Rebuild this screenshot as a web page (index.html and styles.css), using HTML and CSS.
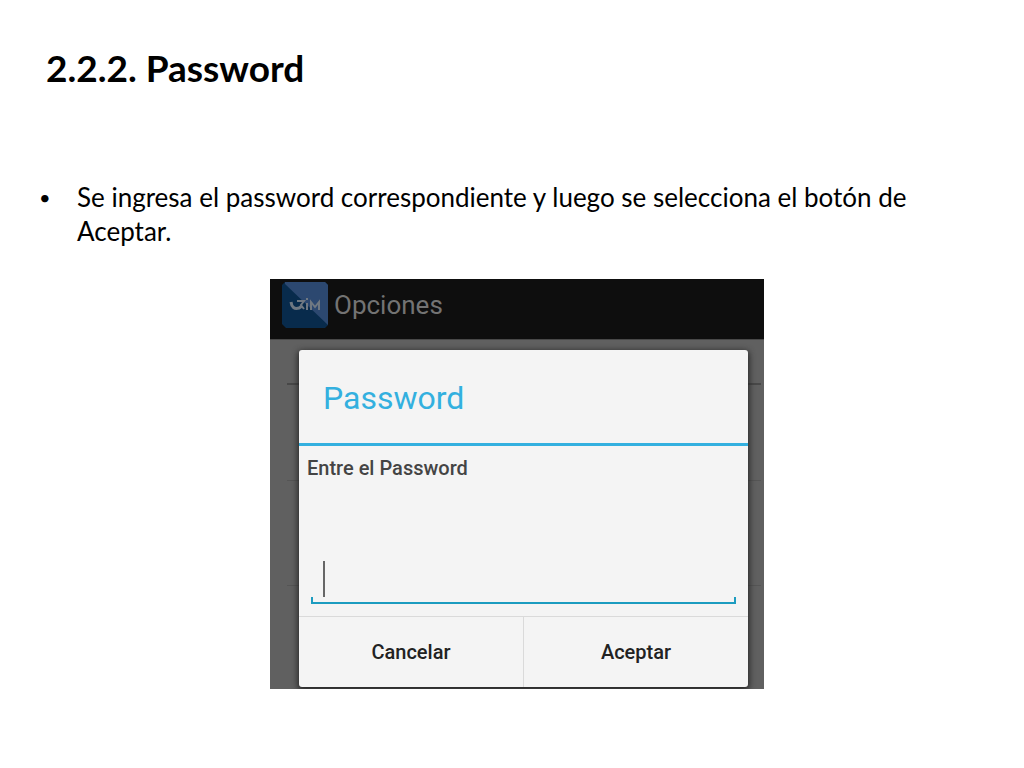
FILE: index.html
```html
<!DOCTYPE html>
<html lang="es">
	<head>
		<meta charset="UTF-8">
		<title>2.2.2. Password</title>
		<link rel="stylesheet" href="styles.css">
	</head>
	<body>
		<main class="slide">
			<h1>2.2.2. Password</h1>
			<ul class="steps">
				<li>Se ingresa el password correspondiente y luego se selecciona el botón de Aceptar.</li>
			</ul>
			<div class="screen">
				<header class="app-bar">
					<svg class="logo" viewBox="0 0 46 46" aria-hidden="true">
						<path d="M3 0H43L46 3V43L43 46H4L0 42V3Z" fill="#082b4c"/>
						<path d="M3 0H43L46 3V43L3 2Z" fill="#2c4870"/>
						<g fill="none" stroke="#6f7882" stroke-width="2">
							<path d="M9 20Q10 28 17 26L20 24" stroke-width="3"/>
							<path d="M15 19H22L19 23L22 27"/>
							<path d="M25 21V28M25 16V18"/>
							<path d="M29 28V20L33 25L37 20V28"/>
						</g>
					</svg>
					<span>Opciones</span>
				</header>
				<div class="content">
					<div class="rows">
						<div class="row row-heading"></div>
						<div class="row"></div>
						<div class="row row-tall"></div>
					</div>
					<form class="dialog">
						<h2>Password</h2>
						<div class="dialog-body">
							<label for="password">Entre el Password</label>
							<div class="field">
								<input type="password" id="password">
								<span class="caret"></span>
							</div>
						</div>
						<div class="buttons">
							<button type="button">Cancelar</button>
							<button type="button">Aceptar</button>
						</div>
					</form>
				</div>
			</div>
		</main>
	</body>
</html>
```
FILE: styles.css
```css
* {
	box-sizing: border-box;
}
body {
	margin: 0;
	background: white;
	color: black;
	font-family: Lato, "Liberation Sans", sans-serif;
}
.slide {
	padding: 44px 36px 79px 46px;
}
h1 {
	margin: 0;
	font-size: 37px;
	line-height: 48px;
}
.steps {
	margin: 88px 0 31px;
	padding-left: 31px;
	list-style: none;
	font-size: 26px;
	line-height: 34px;
}
.steps li {
	position: relative;
}
.steps li::before {
	content: "•";
	position: absolute;
	left: -38px;
	font-size: 20px;
}
.screen {
	width: 100%;
	max-width: 494px;
	margin: 0 auto;
	background: #606060;
	font-family: Roboto, "Liberation Sans", sans-serif;
}
.app-bar {
	display: flex;
	align-items: center;
	gap: 6px;
	height: 60px;
	padding: 0 12px 8px;
	background: #0e0e0e;
	color: #737373;
	font-size: 26px;
}
.logo {
	width: 46px;
	height: 46px;
}

/* the dialog and the dimmed list share one grid cell */
.content {
	display: grid;
	grid-template-columns: 1fr;
	overflow: hidden;
	border-top: 1px solid #484848;
}
.rows, .dialog {
	grid-area: 1 / 1;
}
.rows {
	padding: 0 3px 0 17px;
}
.row {
	height: 96px;
	border-bottom: 1px solid #555;
}
.row-heading {
	height: 45px;
	border-bottom: 2px solid #484848;
}
.row-tall {
	height: 105px;
}
.dialog {
	margin: 10px 16px 2px 29px;
	border-radius: 3px;
	background: #f4f4f4;
	box-shadow: 0 2px 6px 1px #222;
}
h2 {
	margin: 0;
	padding: 3px 24px 0;
	border-bottom: 3px solid #33b0df;
	color: #33b0df;
	font-size: 32px;
	font-weight: normal;
	line-height: 90px;
}
.dialog-body {
	padding: 10px 12px 12px;
}
label {
	display: block;
	margin-left: -4px;
	color: #444;
	font-size: 20px;
	font-weight: 500;
	line-height: 24px;
}
.field {
	position: relative;
	margin-top: 74px;
}
input {
	display: block;
	width: 100%;
	height: 50px;
	padding: 0 12px;
	border: 0;
	border-bottom: 2px solid #1c9cc0;
	outline: 0;
	background: none;
	font-size: 20px;
}
.field::before, .field::after {
	content: "";
	position: absolute;
	bottom: 0;
	width: 2px;
	height: 7px;
	background: #1c9cc0;
}
.field::before {
	left: 0;
}
.field::after {
	right: 0;
}
.caret {
	position: absolute;
	bottom: 7px;
	left: 12px;
	width: 2px;
	height: 36px;
	background: #666;
}
.buttons {
	display: flex;
	border-top: 1px solid #dadada;
}
button {
	flex: 1;
	height: 70px;
	border: 0;
	background: none;
	color: #222;
	font-family: inherit;
	font-size: 20px;
	font-weight: 500;
}
button + button {
	border-left: 1px solid #dadada;
}
```
